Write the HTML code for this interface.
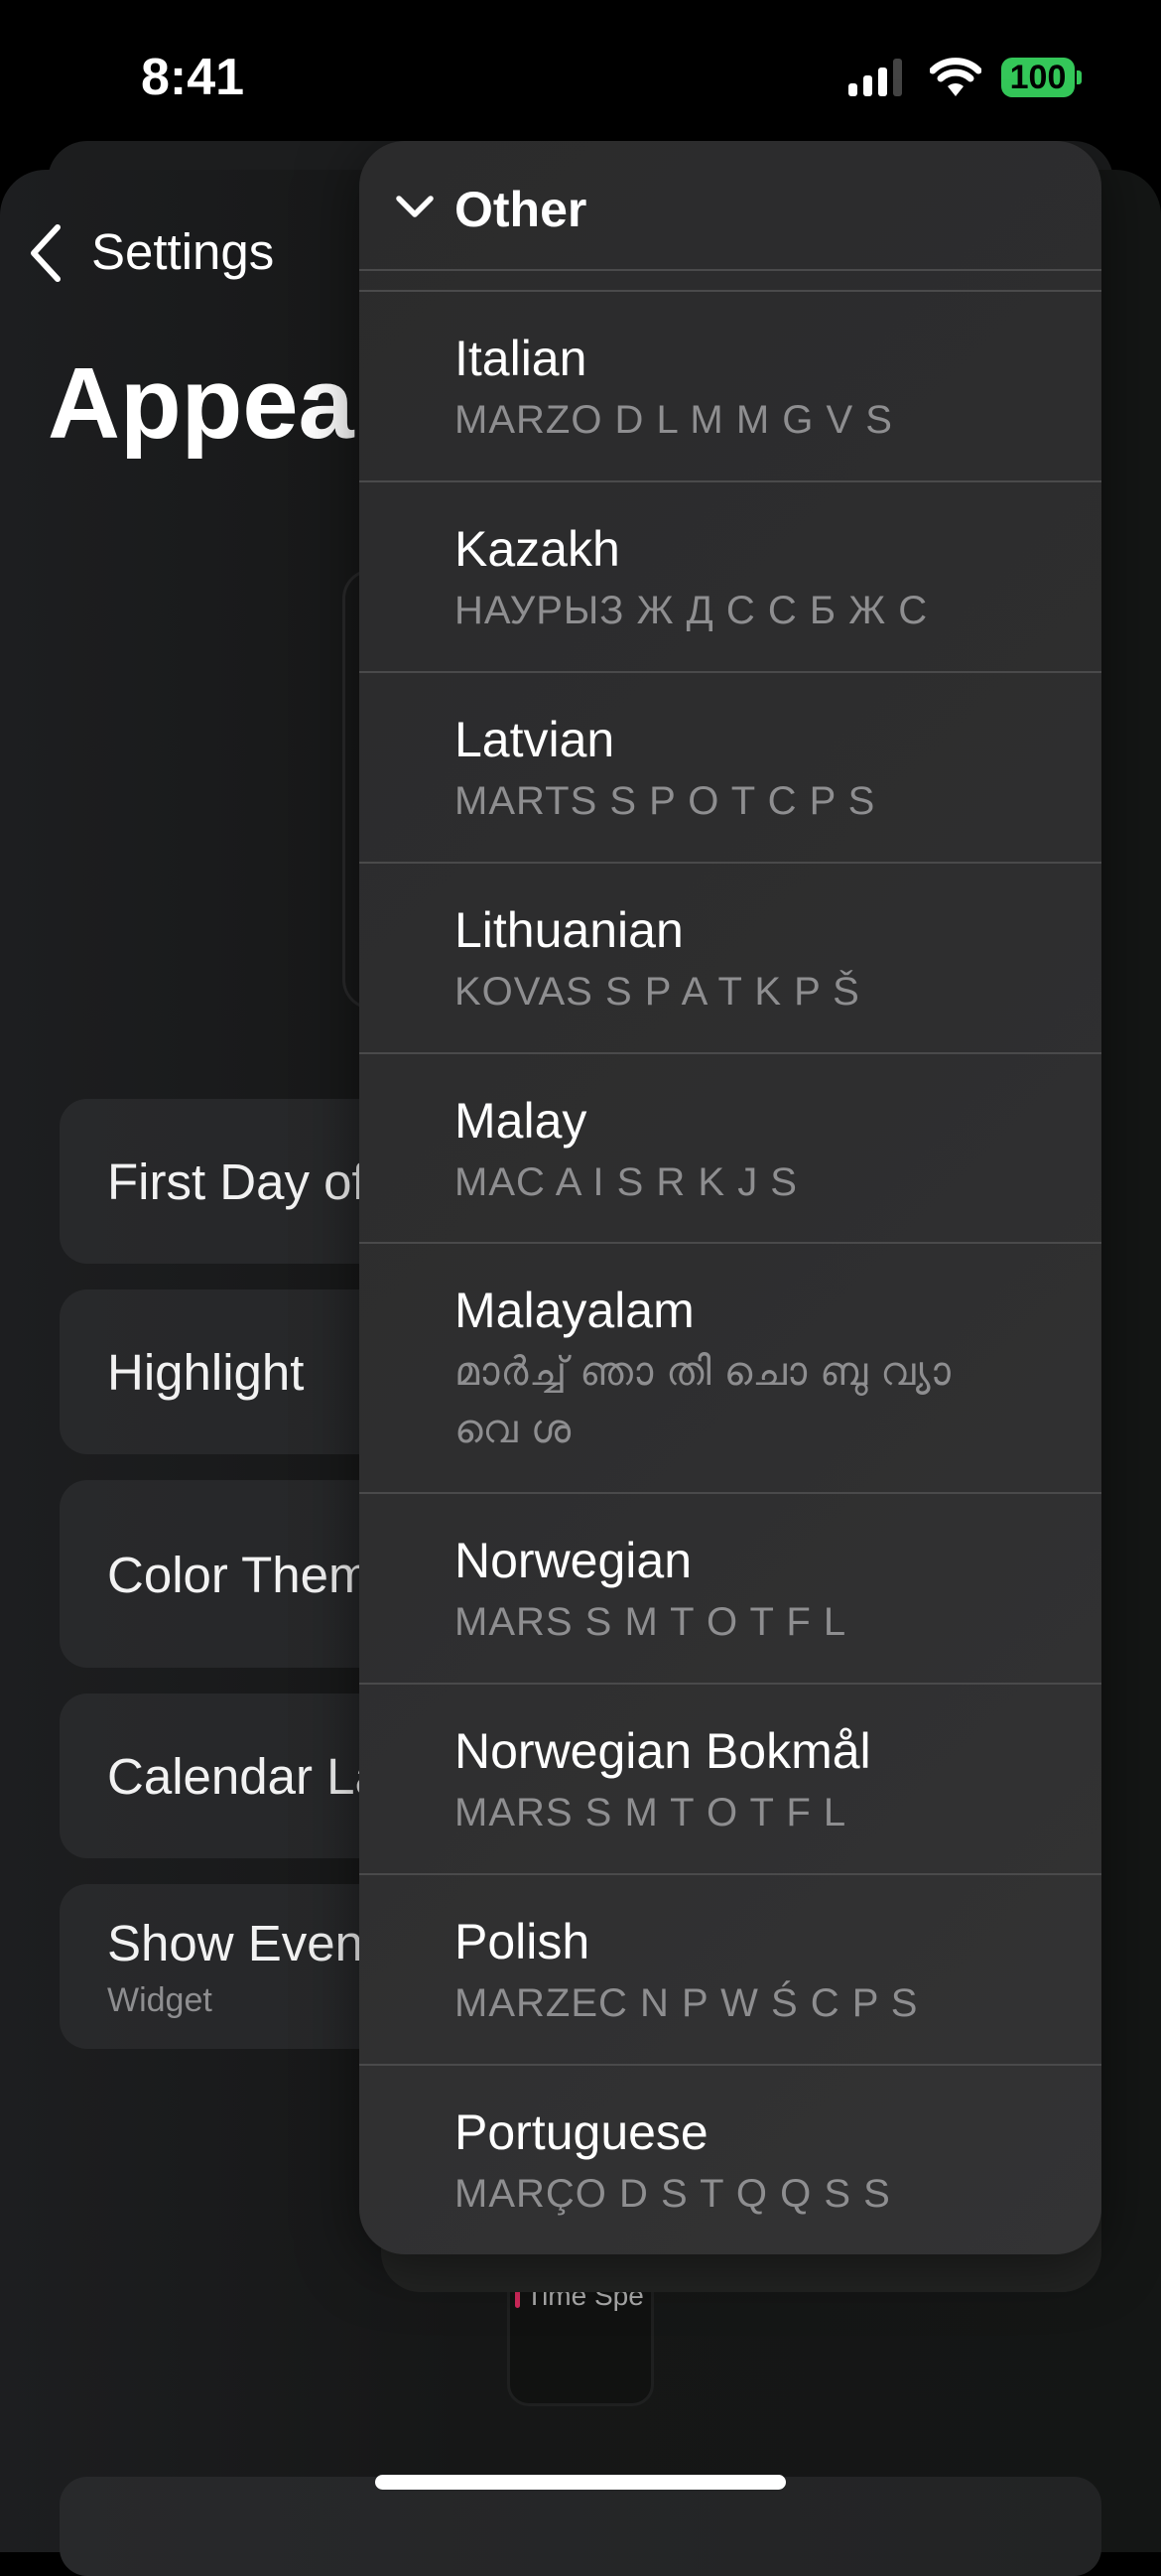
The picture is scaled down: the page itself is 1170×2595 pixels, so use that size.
<!DOCTYPE html>
<html><head><meta charset="utf-8"><style>
*{margin:0;padding:0;box-sizing:border-box}
body{width:1170px;height:2532px;background:#000;position:relative;overflow:hidden;font-family:"Liberation Sans","Noto Sans CJK SC",sans-serif;color:#fff}
.abs{position:absolute}
.page{left:0;top:171px;width:1170px;height:2400px;background:linear-gradient(90deg,#1d1e20,#161717 40%,#141615);border-radius:46px 46px 0 0}
.back{left:48px;top:142px;width:1074px;height:200px;background:#1c1d1e;border-radius:40px}
.card{left:60px;width:1050px;background:linear-gradient(90deg,#28292b,#222324);border-radius:28px}
.lbl{position:absolute;left:48px;font-size:51px;color:#f2f2f2;white-space:nowrap}
.dd{left:362px;top:142px;width:748px;height:2129px;background:linear-gradient(135deg,#2b2b2c,#2e2e2f 50%,#333334);border-radius:46px;overflow:hidden;box-shadow:0 10px 60px rgba(0,0,0,.5)}
.row{position:absolute;left:0;width:748px;border-top:2px solid #4a4a4b}
.t{position:absolute;left:96px;font-size:50px;color:#fff;line-height:1}
.s{position:absolute;left:96px;font-size:40px;color:#8e8e90;line-height:1;letter-spacing:1px}
</style></head><body>
<div class="abs" style="left:142px;top:48px;font-size:52px;font-weight:bold;">8:41</div>
<svg class="abs" style="left:855px;top:58px" width="60" height="40"><rect x="0" y="26" width="9" height="13" rx="3" fill="#fff"/><rect x="15" y="18" width="9" height="21" rx="3" fill="#fff"/><rect x="30" y="10" width="9" height="29" rx="3" fill="#fff"/><rect x="45" y="1" width="9" height="38" rx="3" fill="#444"/></svg>
<svg class="abs" style="left:937px;top:57px" width="52" height="42" viewBox="0 0 52 42"><path d="M3 14 A33 33 0 0 1 49 14" stroke="#fff" stroke-width="7" fill="none" stroke-linecap="round"/><path d="M11 22 A22 22 0 0 1 41 22" stroke="#fff" stroke-width="7" fill="none" stroke-linecap="round"/><path d="M18 30 L26 40 L34 30 A12 12 0 0 0 18 30Z" fill="#fff"/></svg>
<div class="abs" style="left:1009px;top:58px;width:74px;height:40px;background:#34c759;border-radius:11px;color:#000;font-weight:bold;font-size:34px;text-align:center;line-height:40px">100</div>
<div class="abs" style="left:1085px;top:71px;width:5px;height:14px;background:#34c759;border-radius:0 3px 3px 0"></div>
<div class="abs back"></div>
<div class="abs page"></div>
<svg class="abs" style="left:26px;top:225px" width="40" height="60"><path d="M32 4 L8 30 L32 56" stroke="#fff" stroke-width="6" fill="none" stroke-linecap="round" stroke-linejoin="round"/></svg>
<div class="abs" style="left:92px;top:224px;font-size:51px;color:#fff">Settings</div>
<div class="abs" style="left:48px;top:350px;font-size:101px;font-weight:bold;color:#fff">Appea</div>
<div class="abs" style="left:345px;top:573px;width:40px;height:444px;border:3px solid #2a2a2b;border-right:none;border-radius:30px 0 0 30px"></div>
<div class="abs card" style="top:1107px;height:166px"><div class="lbl" style="top:54px">First Day of</div></div>
<div class="abs card" style="top:1299px;height:166px"><div class="lbl" style="top:54px">Highlight</div></div>
<div class="abs card" style="top:1491px;height:189px"><div class="lbl" style="top:66px">Color Theme</div></div>
<div class="abs card" style="top:1706px;height:166px"><div class="lbl" style="top:54px">Calendar La</div></div>
<div class="abs card" style="top:1898px;height:166px"><div class="lbl" style="top:30px">Show Event</div><div class="abs" style="left:48px;top:98px;font-size:34px;color:#8e8e90">Widget</div></div>
<div class="abs card" style="top:2495px;height:100px"></div>
<div class="abs" style="left:511px;top:2290px;width:148px;height:134px;background:#111211;border:3px solid #1f2020;border-radius:0 0 22px 22px"></div>
<div class="abs" style="left:519px;top:2303px;width:5px;height:22px;background:#d0285a;border-radius:3px"></div>
<div class="abs" style="left:530px;top:2297px;font-size:28px;color:#aaa">Time Spe</div>
<div class="abs" style="left:384px;top:2200px;width:726px;height:109px;background:#232423;border-radius:0 0 40px 40px"></div>
<div class="abs dd">
<svg class="abs" style="left:36px;top:52px" width="40" height="28"><path d="M4 6 L20 22 L36 6" stroke="#fff" stroke-width="5.5" fill="none" stroke-linecap="round" stroke-linejoin="round"/></svg>
<div class="abs" style="left:96px;top:40px;font-size:50px;font-weight:bold;color:#fff">Other</div>
<div class="row" style="top:129px;height:21px"></div>
<div class="row" style="top:150px;height:192px"><div class="t" style="top:42px">Italian</div><div class="s" style="top:109px">MARZO D L M M G V S</div></div>
<div class="row" style="top:342px;height:192px"><div class="t" style="top:42px">Kazakh</div><div class="s" style="top:109px">НАУРЫЗ Ж Д С С Б Ж С</div></div>
<div class="row" style="top:534px;height:192px"><div class="t" style="top:42px">Latvian</div><div class="s" style="top:109px">MARTS S P O T C P S</div></div>
<div class="row" style="top:726px;height:192px"><div class="t" style="top:42px">Lithuanian</div><div class="s" style="top:109px">KOVAS S P A T K P Š</div></div>
<div class="row" style="top:918px;height:191px"><div class="t" style="top:42px">Malay</div><div class="s" style="top:109px">MAC A I S R K J S</div></div>
<div class="row" style="top:1109px;height:252px"><div class="t" style="top:42px">Malayalam</div><div class="s" style="top:100px;line-height:58px;font-family:'Liberation Sans','DejaVu Sans',sans-serif">മാർച്ച് ഞാ തി ചൊ ബു വ്യാ<br>വെ ശ</div></div>
<div class="row" style="top:1361px;height:192px"><div class="t" style="top:42px">Norwegian</div><div class="s" style="top:109px">MARS S M T O T F L</div></div>
<div class="row" style="top:1553px;height:192px"><div class="t" style="top:42px">Norwegian Bokmål</div><div class="s" style="top:109px">MARS S M T O T F L</div></div>
<div class="row" style="top:1745px;height:192px"><div class="t" style="top:42px">Polish</div><div class="s" style="top:109px">MARZEC N P W Ś C P S</div></div>
<div class="row" style="top:1937px;height:192px"><div class="t" style="top:42px">Portuguese</div><div class="s" style="top:109px">MARÇO D S T Q Q S S</div></div>
</div>
<div class="abs" style="left:378px;top:2493px;width:414px;height:15px;background:#fff;border-radius:8px"></div>
</body></html>
